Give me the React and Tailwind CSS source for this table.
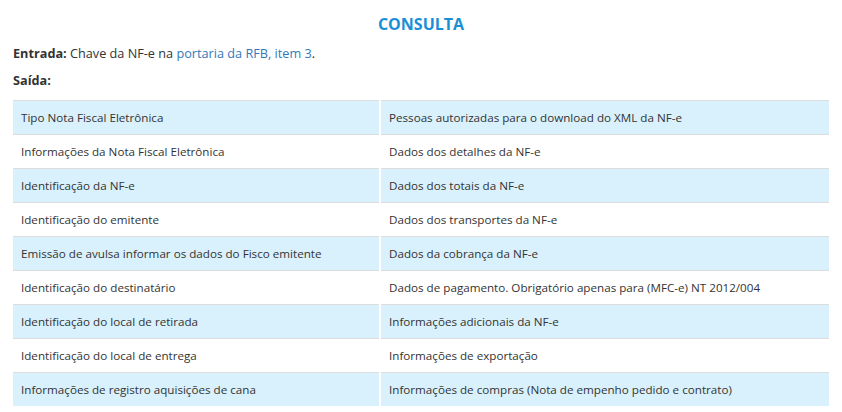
import React from "react";

const rows = [
  ["Tipo Nota Fiscal Eletrônica", "Pessoas autorizadas para o download do XML da NF-e"],
  ["Informações da Nota Fiscal Eletrônica", "Dados dos detalhes da NF-e"],
  ["Identificação da NF-e", "Dados dos totais da NF-e"],
  ["Identificação do emitente", "Dados dos transportes da NF-e"],
  ["Emissão de avulsa informar os dados do Fisco emitente", "Dados da cobrança da NF-e"],
  ["Identificação do destinatário", "Dados de pagamento. Obrigatório apenas para (MFC-e) NT 2012/004"],
  ["Identificação do local de retirada", "Informações adicionais da NF-e"],
  ["Identificação do local de entrega", "Informações de exportação"],
  ["Informações de registro aquisições de cana", "Informações de compras (Nota de empenho pedido e contrato)"],
];

export default function App() {
  return (
    <div className="font-['Open_Sans',sans-serif] text-[12.7px] text-[#333] px-[13px] bg-white min-h-[412px]">
      <h2 className="pt-[13px] text-center text-[16px] font-bold leading-[22px] text-[#1a8fd6]">CONSULTA</h2>
      <p className="mt-[8px] leading-[20px]">
        <b>Entrada:</b> Chave da NF-e na <a className="text-[#3479b9]">portaria da RFB, item 3</a>.
      </p>
      <p className="mt-[7px] leading-[20px] font-bold">Saída:</p>
      <div className="mt-[10px] w-[816px] flex flex-col text-[11.65px]">
        {rows.map((r, i) => {
          const bg = i % 2 === 0 ? "bg-[#d9f1fc]" : "bg-white";
          return (
            <div key={i} className="grid grid-cols-[366px_448px] gap-x-[2px]">
              <div className={`${bg} border-t border-[#dddddd] h-[34px] flex items-center pl-[8px]`}>{r[0]}</div>
              <div className={`${bg} border-t border-[#dddddd] h-[34px] flex items-center pl-[8px]`}>{r[1]}</div>
            </div>
          );
        })}
      </div>
    </div>
  );
}
